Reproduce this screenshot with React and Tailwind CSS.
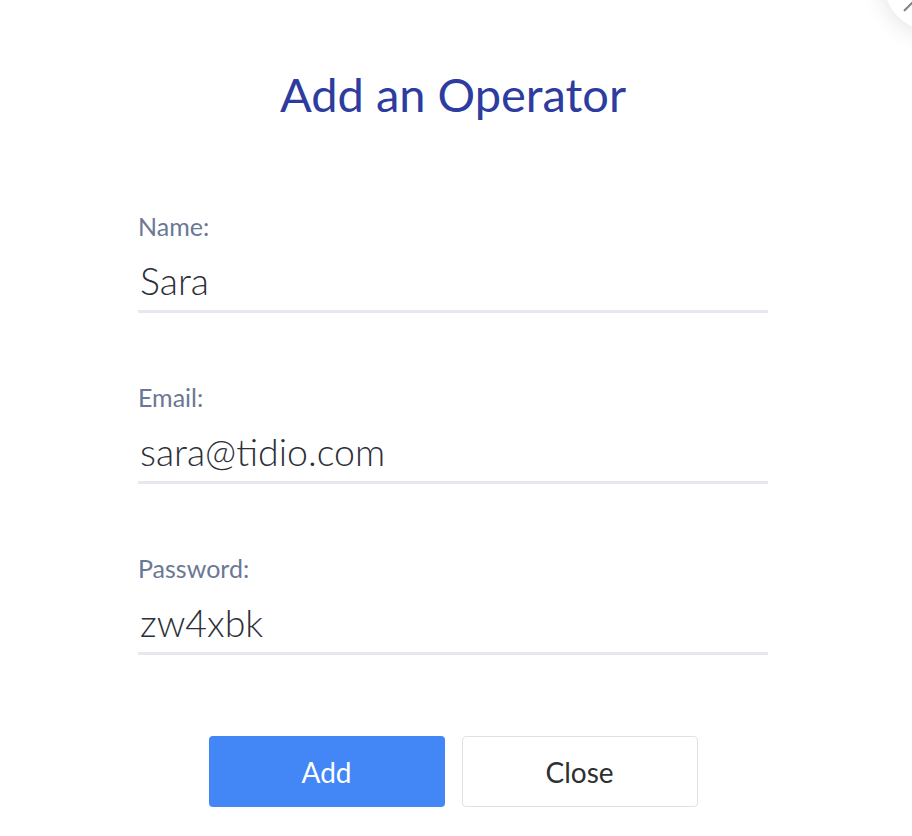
import React from 'react';

const fields = [
  { label: 'Name:', value: 'Sara' },
  { label: 'Email:', value: 'sara@tidio.com' },
  { label: 'Password:', value: 'zw4xbk' },
];

export default function App() {
  return (
    <div
      className="relative w-[912px] h-[836px] overflow-hidden bg-white"
      style={{ fontFamily: 'Lato, "Open Sans", sans-serif' }}
    >
      {/* close bubble, cut by the corner */}
      <button className="absolute left-[883px] top-[-72px] w-[104px] h-[104px] rounded-full bg-white shadow-[0_2px_24px_rgba(0,0,0,0.12)] flex items-center justify-center">
        <svg width="40" height="40" viewBox="0 0 24 24" className="translate-x-[-17px] translate-y-[17px]">
          <path d="M4 4L20 20M20 4L4 20" stroke="#858585" strokeWidth="1.3" strokeLinecap="round" />
        </svg>
      </button>

      <div className="flex flex-col items-center pt-[64px]">
        <h1 className="text-[47px] leading-[60px] text-[#2d3c9e] ml-[-6px]">Add an Operator</h1>

        <div className="w-[630px] ml-[-6px] mt-[90px] flex flex-col gap-[72px]">
          {fields.map((f) => (
            <div key={f.label} className="flex flex-col">
              <label className="text-[25px] leading-[24px] text-[#6b7894]">{f.label}</label>
              <div className="mt-[22px] pb-[8px] border-b-[3px] border-[#e6e8ee] text-[37.5px] leading-[42px] font-light text-[#2c2f3a] pl-[2px]">
                {f.value}
              </div>
            </div>
          ))}
        </div>

        <div className="flex gap-[17px] mt-[81px] ml-[-6px]">
          <button className="w-[236px] h-[71px] rounded-[4px] bg-[#4287f5] text-white text-[28px]">Add</button>
          <button className="w-[236px] h-[71px] rounded-[4px] bg-white border border-[#dde2e8] text-[#2f2f2f] text-[28px]">Close</button>
        </div>
      </div>
    </div>
  );
}
